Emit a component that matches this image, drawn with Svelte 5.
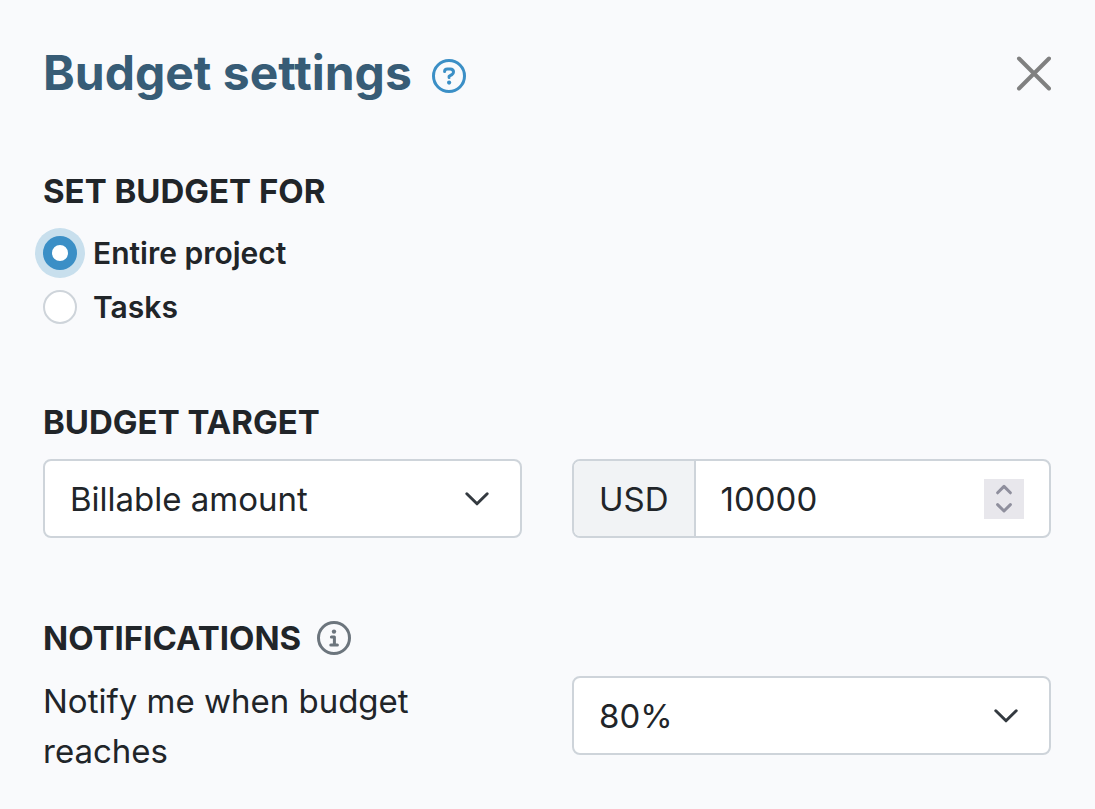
<script lang="ts">
  let { onClose = () => {} } = $props<{ onClose?: () => void }>();

  let scope = $state('project');
  let target = $state('billable');
  let amount = $state(10000);
  let threshold = $state('80');

  const scopes = [
    { value: 'project', label: 'Entire project' },
    { value: 'tasks', label: 'Tasks' }
  ];
</script>

{#snippet chevron()}
  <svg class="chevron" viewBox="0 0 28 28" aria-hidden="true">
    <path d="M3.8 8.8L14 18.8L24.2 8.8" />
  </svg>
{/snippet}

<main class="settings">
  <header>
    <h1>Budget settings</h1>
    <button class="icon help" type="button" aria-label="Help">
      <svg viewBox="0 0 34 34">
        <circle cx="17" cy="17" r="15.5" />
        <path d="M12.6 12.4C12.6 10.8 13.8 10 15.4 10H18.2C20.2 10 21.5 11.2 21.5 13C21.5 14.2 20.9 15 19.9 15.6L17.1 17.2V18.4" />
        <circle class="dot" cx="17.1" cy="23.6" r="2.1" />
      </svg>
    </button>
    <button class="close" type="button" aria-label="Close" onclick={onClose}>
      <svg viewBox="0 0 36 36">
        <path d="M4 3.5l30 30M34 3.5L4 33.5" />
      </svg>
    </button>
  </header>

  <fieldset>
    <legend>SET BUDGET FOR</legend>
    {#each scopes as item}
      <label class="choice">
        <input type="radio" name="scope" value={item.value} bind:group={scope} />
        {item.label}
      </label>
    {/each}
  </fieldset>

  <section class="target">
    <h2 id="target-title">BUDGET TARGET</h2>
    <div class="row">
      <div class="control">
        <select aria-labelledby="target-title" bind:value={target}>
          <option value="billable">Billable amount</option>
          <option value="hours">Hours</option>
        </select>
        {@render chevron()}
      </div>
      <div class="control group">
        <label class="currency" for="amount">USD</label>
        <input id="amount" type="number" bind:value={amount} />
        <div class="stepper">
          <button type="button" aria-label="Increase" onclick={() => amount++}>
            <svg viewBox="0 0 20 20"><path d="M3.6 13.8L10 7.4L16.4 13.8" /></svg>
          </button>
          <button type="button" aria-label="Decrease" onclick={() => amount--}>
            <svg viewBox="0 0 20 20"><path d="M3.6 5.6L10 12L16.4 5.6" /></svg>
          </button>
        </div>
      </div>
    </div>
  </section>

  <section class="notifications">
    <div class="title">
      <h2>NOTIFICATIONS</h2>
      <button class="icon info" type="button" aria-label="About notifications">
        <svg viewBox="0 0 34 34">
          <circle cx="17" cy="17" r="15.5" />
          <circle class="dot" cx="17" cy="10.6" r="2.2" />
          <path d="M14.4 16H17.4V23.8M13.8 24.1H20.4" />
        </svg>
      </button>
    </div>
    <div class="row">
      <label for="threshold">Notify me when budget reaches</label>
      <div class="control">
        <select id="threshold" bind:value={threshold}>
          <option value="50">50%</option>
          <option value="80">80%</option>
          <option value="100">100%</option>
        </select>
        {@render chevron()}
      </div>
    </div>
  </section>
</main>

<style>
  :global(body) {
    margin: 0;
    background: #f9fafc;
  }
  .settings {
    padding: 43px 44px 32px 43px;
    color: #212529;
    font-family: Inter, "Liberation Sans", sans-serif;
    font-size: 33px;
    line-height: 50px;
  }
  svg {
    display: block;
    fill: none;
    stroke: currentColor;
    stroke-linecap: round;
    stroke-linejoin: round;
  }
  button {
    padding: 0;
    border: 0;
    background: none;
    color: inherit;
    cursor: pointer;
  }
  header {
    display: flex;
    align-items: center;
  }
  h1 {
    margin: 0;
    color: #375c76;
    font-size: 48px;
    font-weight: 700;
    line-height: 60px;
  }
  h2,
  legend {
    margin: 0;
    padding: 0;
    font-size: 33px;
    font-weight: 700;
  }
  .icon svg {
    width: 34px;
    height: 34px;
    stroke-width: 3;
  }
  .icon .dot {
    fill: currentColor;
    stroke: none;
  }
  .help {
    margin: 6px 0 0 20px;
    color: #3b8fc6;
  }
  .info {
    color: #6c757d;
  }
  .close {
    margin-left: auto;
    color: #808080;
  }
  .close svg {
    width: 36px;
    height: 36px;
    stroke-width: 4;
  }

  fieldset {
    margin: 63px 0 0;
    padding: 0;
    border: 0;
  }
  legend {
    margin-bottom: 10px;
  }
  .choice {
    display: flex;
    align-items: center;
    gap: 16px;
    font-size: 30px;
    font-weight: 600;
    line-height: 54px;
  }
  .choice input {
    appearance: none;
    box-sizing: border-box;
    width: 34px;
    height: 34px;
    margin: 0;
    border: 2px solid #ced4da;
    border-radius: 50%;
    background: #fff;
  }
  .choice input:checked {
    border: 9px solid #3b8fc6;
    box-shadow: 0 0 0 8px #c8dfed;
  }

  .target {
    margin-top: 63px;
  }
  .target h2 {
    margin-bottom: 12px;
  }
  .row {
    display: grid;
    grid-template-columns: 1fr 1fr;
    gap: 50px;
    align-items: start;
  }
  .control {
    display: grid;
    align-items: center;
    box-sizing: border-box;
    height: 79px;
    overflow: hidden;
    border: 2px solid #ced4da;
    border-radius: 8px;
    background: #fff;
  }
  .control select {
    grid-area: 1 / 1;
    appearance: none;
    width: 100%;
    height: 100%;
    padding: 0 80px 0 25px;
    border: 0;
    outline: 0;
    background: transparent;
    color: inherit;
    font: inherit;
  }
  .chevron {
    grid-area: 1 / 1;
    justify-self: end;
    width: 28px;
    height: 28px;
    margin-right: 29px;
    color: #343a40;
    stroke-width: 3;
    pointer-events: none;
  }
  .control.group {
    display: flex;
  }
  .currency {
    display: flex;
    align-items: center;
    height: 100%;
    padding: 0 25px;
    border-right: 2px solid #ced4da;
    background: #f1f3f5;
  }
  .group input {
    flex: 1;
    appearance: textfield;
    min-width: 0;
    padding: 0 0 0 25px;
    border: 0;
    outline: 0;
    background: transparent;
    color: inherit;
    font: inherit;
  }
  .group input::-webkit-inner-spin-button {
    appearance: none;
    margin: 0;
  }
  .stepper {
    display: flex;
    flex-direction: column;
    width: 40px;
    height: 40px;
    margin-right: 25px;
    background: #e8e7ec;
    color: #8f8f9d;
  }
  .stepper button {
    display: grid;
    flex: 1;
    place-items: center;
  }
  .stepper svg {
    width: 20px;
    height: 20px;
    stroke-width: 3;
  }

  .notifications {
    margin-top: 75px;
  }
  .title {
    display: flex;
    align-items: center;
    gap: 16px;
    margin-bottom: 13px;
  }
</style>
